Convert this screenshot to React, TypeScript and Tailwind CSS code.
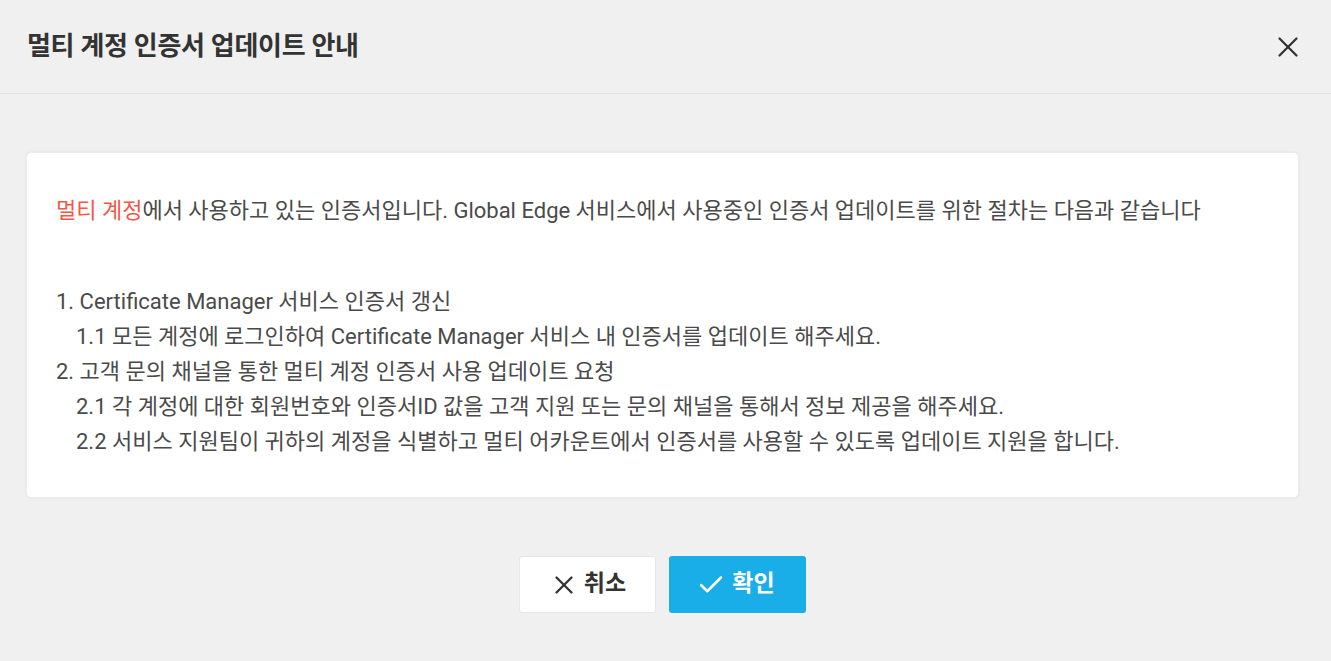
import { X, Check } from 'lucide-react'

const font = { fontFamily: "Roboto, 'Noto Sans CJK KR', sans-serif" }

export default function App() {
  return (
    <div className="min-h-screen w-full bg-[#f0f0f0] flex flex-col text-[#444]" style={font}>
      {/* header */}
      <div className="h-[94px] flex items-center justify-between pl-[27px] pr-[26px] border-b border-[#e4e4e4]">
        <h1 className="text-[26px] font-bold text-[#333] tracking-[-0.3px]">멀티 계정 인증서 업데이트 안내</h1>
        <button className="text-[#333]">
          <X size={34} strokeWidth={1.6} />
        </button>
      </div>

      {/* body */}
      <div className="pl-[26px] pr-[32px] pt-[58px]">
        <div className="bg-white rounded-[5px] shadow-[0_0_2px_rgba(0,0,0,0.08)] border border-[#ebebeb] pl-[29px] pr-6 pt-[40px] pb-[38px] text-[22px] text-[#4a4a4a]">
          <p className="leading-[35px]">
            <span className="text-[#f4564a]">멀티 계정</span>에서 사용하고 있는 인증서입니다. Global Edge 서비스에서 사용중인 인증서 업데이트를 위한 절차는 다음과 같습니다
          </p>
          <ul className="mt-[56px] leading-[35px]">
            <li>1. Certificate Manager 서비스 인증서 갱신</li>
            <li className="pl-[20px]">1.1 모든 계정에 로그인하여 Certificate Manager 서비스 내 인증서를 업데이트 해주세요.</li>
            <li>2. 고객 문의 채널을 통한 멀티 계정 인증서 사용 업데이트 요청</li>
            <li className="pl-[20px]">2.1 각 계정에 대한 회원번호와 인증서ID 값을 고객 지원 또는 문의 채널을 통해서 정보 제공을 해주세요.</li>
            <li className="pl-[20px]">2.2 서비스 지원팀이 귀하의 계정을 식별하고 멀티 어카운트에서 인증서를 사용할 수 있도록 업데이트 지원을 합니다.</li>
          </ul>
        </div>
      </div>

      {/* footer */}
      <div className="flex justify-center gap-[13px] pt-[58px] pr-[6px]">
        <button className="w-[137px] h-[57px] bg-white border border-[#e6e6e6] rounded-[3px] flex items-center justify-center gap-[5px] text-[23px] font-bold text-[#333]">
          <X size={30} strokeWidth={1.8} />
          취소
        </button>
        <button className="w-[137px] h-[57px] bg-[#1aaee8] rounded-[3px] flex items-center justify-center gap-[6px] pr-[4px] text-[23px] font-bold text-white">
          <Check size={30} strokeWidth={2} />
          확인
        </button>
      </div>
    </div>
  )
}
